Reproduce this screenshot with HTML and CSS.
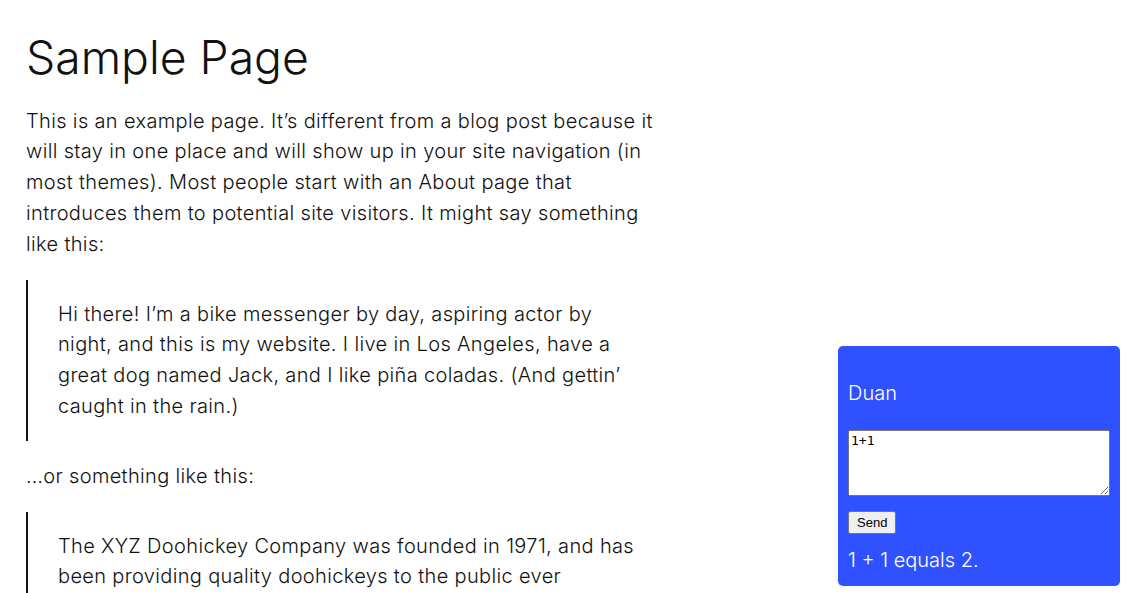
FILE: index.html
```html
<!DOCTYPE html>
<html lang="en">
<head>
<meta charset="utf-8">
<title>Sample Page</title>
<link rel="stylesheet" href="styles.css">
</head>
<body>
<main class="content">
  <h1 class="title">Sample Page</h1>
  <p class="text">This is an example page. It’s different from a blog post because it will stay in one place and will show up in your site navigation (in most themes). Most people start with an About page that introduces them to potential site visitors. It might say something like this:</p>
  <blockquote class="quote">
    <p class="text">Hi there! I’m a bike messenger by day, aspiring actor by night, and this is my website. I live in Los Angeles, have a great dog named Jack, and I like piña coladas. (And gettin’ caught in the rain.)</p>
  </blockquote>
  <p class="text">…or something like this:</p>
  <blockquote class="quote">
    <p class="text">The XYZ Doohickey Company was founded in 1971, and has been providing quality doohickeys to the public ever<br>since. Located in Gotham City, XYZ employs over 2,000 people and does all kinds of awesome things for the Gotham community.</p>
  </blockquote>
</main>
<aside class="widget">
  <h2 class="widget-title">Duan</h2>
  <textarea class="widget-input">1+1</textarea>
  <div class="widget-actions"><button class="widget-send" type="button">Send</button></div>
  <p class="widget-result">1 + 1 equals 2.</p>
</aside>
</body>
</html>
```

FILE: styles.css
```css
html, body {
  margin: 0;
  padding: 0;
  background: #ffffff;
}

body {
  font-family: Inter, "Noto Sans", sans-serif;
  color: #111111;
  overflow: hidden;
  height: 593px;
}

.content {
  width: 630px;
  padding: 0 0 0 26px;
}

.title {
  font-weight: 300;
  font-size: 46.3px;
  line-height: 1.2;
  margin: 30px 0 20px;
  letter-spacing: 0;
}

.text {
  font-weight: 300;
  font-size: 20px;
  line-height: 30.8px;
  letter-spacing: 0.35px;
  margin: 0 0 20px;
}

.quote {
  margin: 0 0 20px;
  border-left: 2px solid #111111;
  padding: 19px 20px 19px 30px;
}

.quote .text {
  margin: 0;
}

.widget {
  position: fixed;
  right: 7px;
  bottom: 7px;
  width: 262px;
  padding: 10px 10px 12px;
  background: #2f51ff;
  border-radius: 5px;
  color: #ffffff;
  font-family: Inter, "Noto Sans", sans-serif;
}

.widget-title {
  font-weight: 300;
  font-size: 20px;
  line-height: 28px;
  margin: 23px 0 23px;
}

.widget-input {
  display: block;
  box-sizing: border-box;
  width: 262px;
  height: 66px;
  margin: 0;
  font-family: "DejaVu Sans Mono", monospace;
  font-size: 13px;
}

.widget-actions {
  margin-top: 15px;
}

.widget-send {
  font-family: "Liberation Sans", Arial, sans-serif;
  font-size: 13px;
  padding: 2px 7px;
}

.widget-result {
  font-weight: 300;
  font-size: 20px;
  line-height: 28px;
  margin: 12px 0 0;
}
```
